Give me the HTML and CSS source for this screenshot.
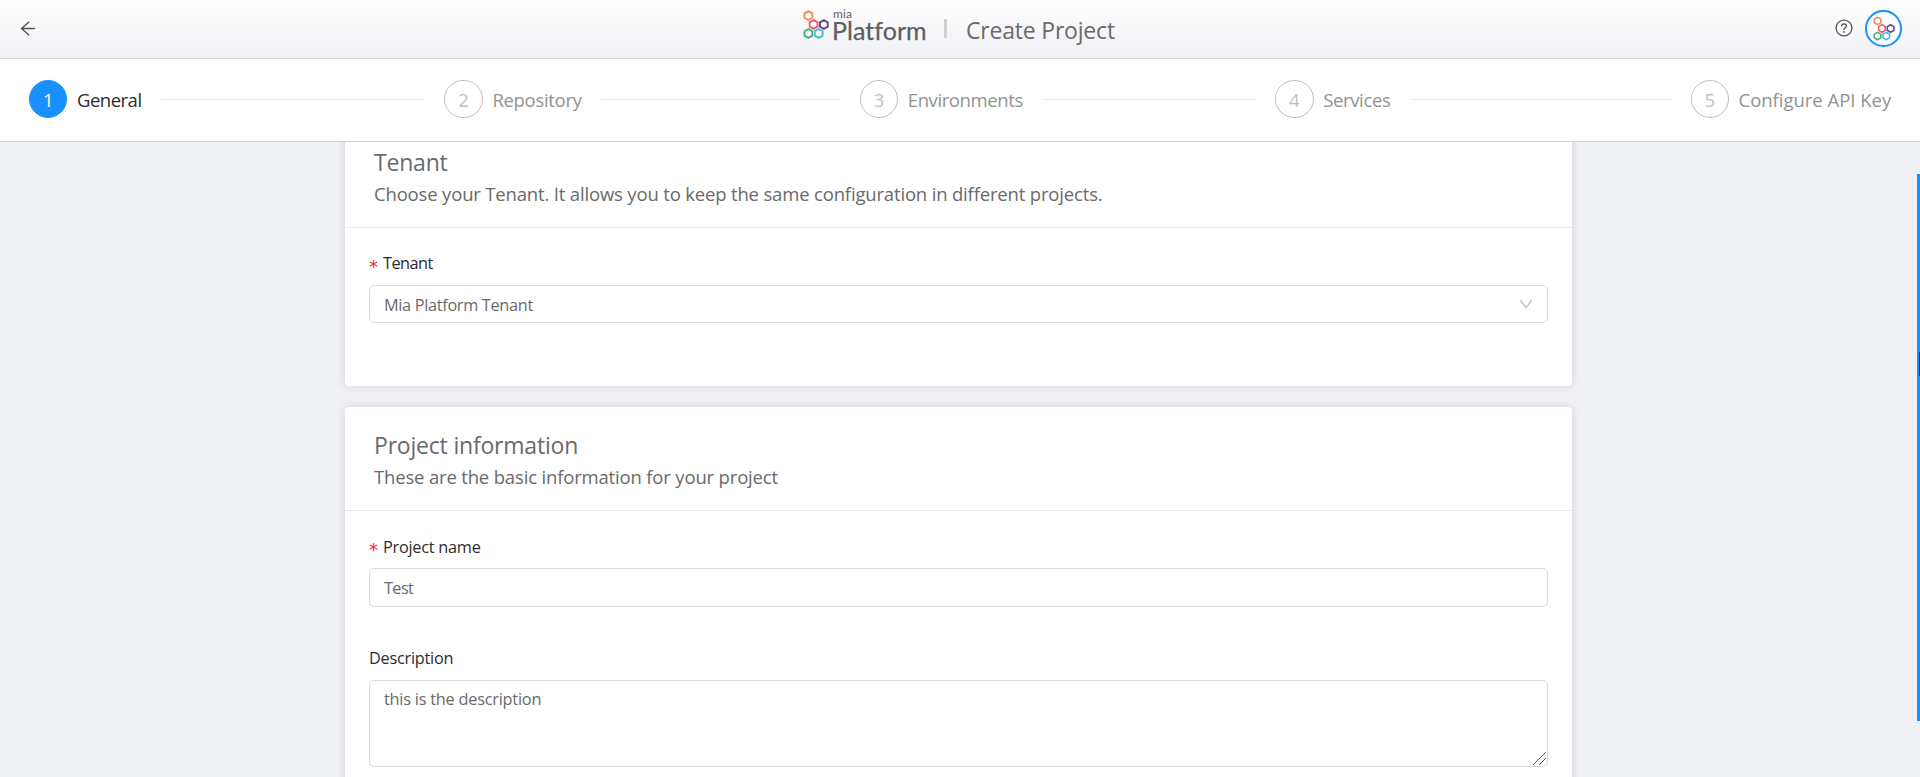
FILE: index.html
```
<!DOCTYPE html>
<html lang="en">
<head>
<meta charset="utf-8">
<title>Create Project</title>
<link rel="stylesheet" href="styles.css">
</head>
<body>
<svg class="defs" width="0" height="0">
  <symbol id="mark" viewBox="0 0 26 29">
    <g fill="none" stroke-width="1.9">
      <path stroke="#ee8e55" d="M5.4 1.2 9.3 3.4V7.8L5.4 10 1.5 7.8V3.4Z"/>
      <path stroke="#e5626b" d="M10.6 10.1 14.5 12.3V16.7L10.6 18.9 6.7 16.7V12.3Z"/>
      <path stroke="#5e4a8e" d="M20.8 10.1 24.7 12.3V16.7L20.8 18.9 16.9 16.7V12.3Z"/>
      <path stroke="#4fab7b" d="M5.4 19 9.3 21.2V25.6L5.4 27.8 1.5 25.6V21.2Z"/>
      <path stroke="#4bb8dc" d="M15.7 19 19.6 21.2V25.6L15.7 27.8 11.8 25.6V21.2Z"/>
    </g>
  </symbol>
</svg>
<header class="topbar">
  <div class="topbar-left">
    <svg class="back" width="16" height="16" viewBox="0 0 16 16"><path d="M15 7.5H1.8M9.2 .7 1.5 7.5 9.2 14.3" fill="none" stroke="#555" stroke-width="1.4"/></svg>
  </div>
  <div class="brand">
    <svg class="logo-mark" width="26" height="29"><use href="#mark"/></svg>
    <div class="logo-text"><span class="mia">mia</span><span class="platform">Platform</span></div>
    <span class="divider"></span>
    <h1 class="page-title">Create Project</h1>
  </div>
  <div class="topbar-right">
    <svg width="18" height="18" viewBox="0 0 18 18"><circle cx="9" cy="9" r="7.9" fill="none" stroke="#555" stroke-width="1.3"/><path d="M6.6 7.2C6.6 5.7 7.6 4.8 9 4.8S11.4 5.7 11.4 7C11.4 8.7 9 8.7 9 10.9" fill="none" stroke="#555" stroke-width="1.3"/><circle cx="9" cy="12.9" r=".85" fill="#555"/></svg>
    <span class="avatar"><svg width="22" height="25"><use href="#mark"/></svg></span>
  </div>
</header>
<nav class="steps">
  <div class="step active"><span class="num">1</span><span class="name s1">General</span></div>
  <div class="step"><span class="num">2</span><span class="name s2">Repository</span></div>
  <div class="step"><span class="num">3</span><span class="name s3">Environments</span></div>
  <div class="step"><span class="num">4</span><span class="name s4">Services</span></div>
  <div class="step"><span class="num">5</span><span class="name s5">Configure API Key</span></div>
</nav>
<main class="content">
  <section class="card card-tenant">
    <div class="card-head">
      <h2>Tenant</h2>
      <p>Choose your Tenant. It allows you to keep the same configuration in different projects.</p>
    </div>
    <div class="card-body">
      <div class="label label-tenant"><i class="req">*</i>Tenant</div>
      <div class="select"><span>Mia Platform Tenant</span><svg width="14" height="12" viewBox="0 0 14 12"><path d="M1.2 2 7 9.6 12.8 2" fill="none" stroke="#bfbfbf" stroke-width="1.3"/></svg></div>
    </div>
  </section>
  <section class="card card-info">
    <div class="card-head">
      <h2>Project information</h2>
      <p>These are the basic information for your project</p>
    </div>
    <div class="card-body">
      <div class="label label-name"><i class="req">*</i>Project name</div>
      <input class="input" type="text" value="Test">
      <div class="label label-desc">Description</div>
      <div class="area-wrap">
        <textarea class="textarea" spellcheck="false">this is the description</textarea>
        <svg class="grip" width="13" height="13" viewBox="0 0 13 13"><path d="M.5 12.5 12.5 .5M6.5 12.5 12.5 6.5" stroke="#555" stroke-width="1" stroke-linecap="square"/></svg>
      </div>
    </div>
  </section>
</main>
<div class="scroll-thumb"><span></span></div>
</body>
</html>
```
FILE: styles.css
```
* { box-sizing: border-box; }
body {
  margin: 0;
  height: 777px;
  overflow: hidden;
  display: flex;
  flex-direction: column;
  background: #f0f1f5;
  color: #6a6a6a;
  font-family: "Open Sans", "Noto Sans", sans-serif;
}
.defs { position: absolute; }
h1, h2, p { margin: 0; font-weight: 400; }

.topbar {
  flex: none;
  height: 59px;
  display: grid;
  grid-template-columns: 1fr auto 1fr;
  background: linear-gradient(#fff, #eff0f4);
  border-bottom: 1px solid #d5d7db;
}
.topbar-left { padding: 21px 0 0 20px; }
.back { display: block; }
.brand { display: flex; align-items: flex-start; width: 314px; }
.logo-mark { margin: 10px 0 0 0; flex: none; }
.logo-text { width: 92px; margin-left: 3px; display: flex; flex-direction: column; font-family: Lato, sans-serif; color: #5d5e60; white-space: nowrap; }
.mia { font-size: 12px; line-height: 12px; margin: 8px 0 0 1px; letter-spacing: .1px; }
.platform { font-size: 25px; line-height: 20px; letter-spacing: .05px; -webkit-text-stroke: .25px #5d5e60; }
.divider { width: 3px; height: 19px; margin: 19px 0 0 20px; background: #d0d1d3; }
.page-title { margin-left: 19px; font-size: 23px; line-height: 32px; margin-top: 14px; letter-spacing: -.2px; white-space: nowrap; }
.topbar-right { display: flex; justify-content: flex-end; padding: 10px 18px 0 0; gap: 12px; }
.topbar-right > svg { margin-top: 9px; }
.avatar { width: 37px; height: 37px; border: 2.5px solid #1890ff; border-radius: 50%; background: #fff; display: flex; align-items: center; justify-content: center; }

.steps {
  flex: none;
  height: 83px;
  padding: 21px 29px 0;
  display: flex;
  background: #fff;
  border-bottom: 1px solid #ced0d3;
}
.step { flex: 0 0 415.4px; height: 38px; display: flex; align-items: center; color: #929292; font-size: 18.5px; }
.step:last-child { flex: none; }
.step:not(:last-child)::after { content: ""; flex: 1; height: 1px; background: #e8e8e8; margin: 0 19px 0 19px; }
.num { flex: none; width: 38.4px; height: 38.4px; border: 1px solid #bfbfbf; border-radius: 50%; color: #bfbfbf; text-align: center; line-height: 38px; }
.active .num { background: #1890ff; border-color: #1890ff; color: #fff; }
.active { color: #2c2c2c; }
.name { margin-left: 9.6px; line-height: 38px; padding-top: 1px; white-space: nowrap; letter-spacing: -.5px; }
.s1 { width: 65px; }
.s2 { width: 90px; letter-spacing: -.3px; }
.s3 { width: 115px; letter-spacing: -.4px; }
.s4 { width: 68px; letter-spacing: -.35px; }
.s5 { letter-spacing: -.02px; }

.content { flex: 1; min-height: 0; overflow: hidden; padding: 0 348px 0 345px; }
.card { background: #fff; border-radius: 4px; box-shadow: 0 0 10px rgba(0, 0, 0, .12); }
.card-tenant { margin-top: -18px; height: 262px; }
.card-info { margin-top: 21px; height: 420px; }
.card-head { height: 104px; padding: 22px 29px 0; border-bottom: 1px solid #e8e8e8; }
.card-head h2 { font-size: 23px; line-height: 32px; letter-spacing: -.2px; }
.card-head p { font-size: 18.5px; line-height: 32px; letter-spacing: -.17px; white-space: nowrap; }
.card-body { padding: 23px 24px 0; font-size: 16.3px; letter-spacing: -.32px; }
.label { line-height: 25px; height: 34px; color: #2c2c2c; display: flex; letter-spacing: -.25px; }
.label-tenant { letter-spacing: -.55px; }
.label-name { line-height: 27px; }
.req { font-family: "DejaVu Sans", sans-serif; font-style: normal; font-size: 18px; line-height: 32px; color: #f5222d; width: 14px; letter-spacing: 0; }
.select, .input, .textarea { display: block; width: 1179px; border: 1px solid #d9d9d9; border-radius: 5px; background: #fff; color: #6a6a6a; font: inherit; letter-spacing: inherit; padding: 0 14px; }
.select { height: 38px; display: flex; align-items: center; justify-content: space-between; }
.select span { padding-top: 1px; }
.input { height: 39px; outline: 0; letter-spacing: -.6px; }
.label-desc { margin-top: 39px; }
.area-wrap { position: relative; width: 1179px; }
.textarea { height: 87px; padding: 5px 14px; line-height: 26px; resize: none; outline: 0; letter-spacing: -.22px; }
.grip { position: absolute; right: 2px; bottom: 2px; }

.scroll-thumb { position: absolute; right: 0; top: 174px; width: 3px; height: 547px; background: #1890ff; }
.scroll-thumb span { display: block; margin: 178px 0 0 2px; width: 1px; height: 24px; background: #001529; }
```
